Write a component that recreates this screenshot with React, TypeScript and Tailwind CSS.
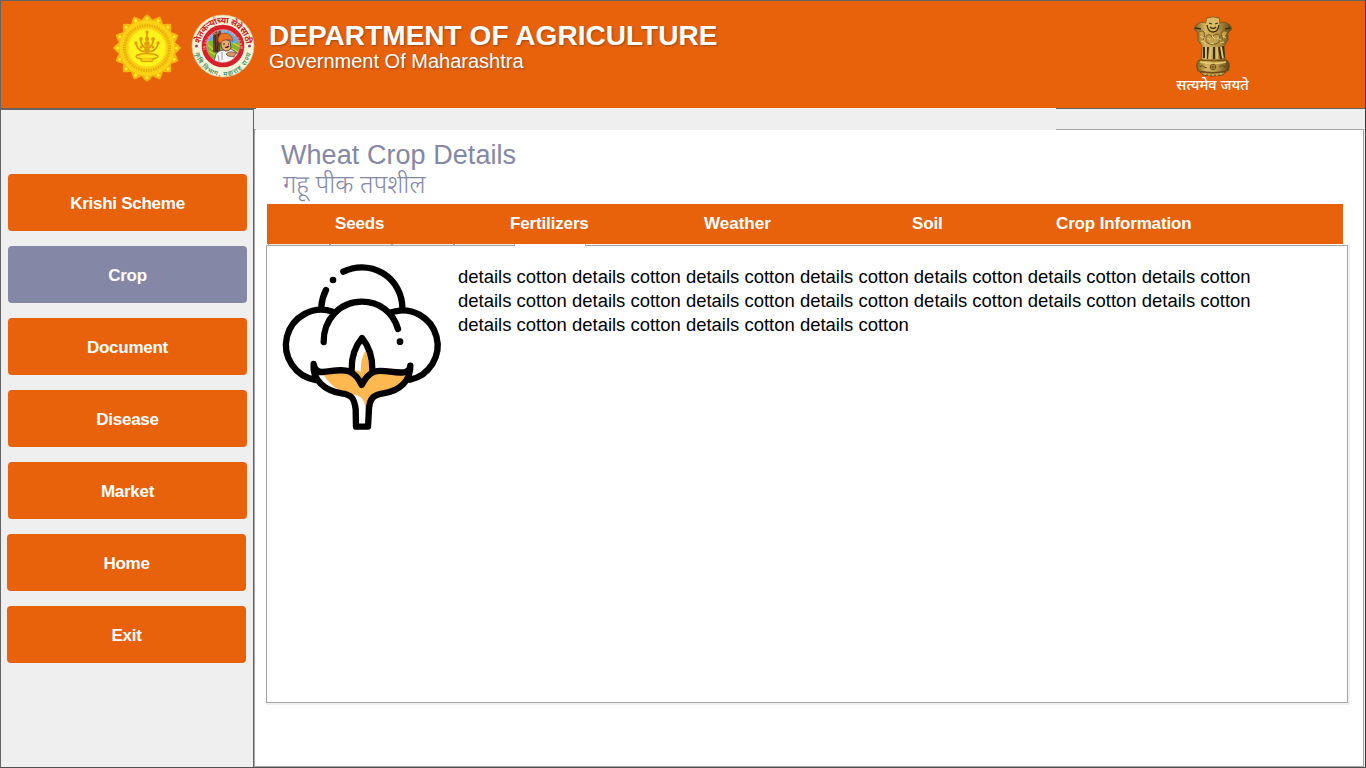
import React from "react";

const menu = [
  { label: "Krishi Scheme" },
  { label: "Crop", active: true },
  { label: "Document" },
  { label: "Disease" },
  { label: "Market" },
  { label: "Home", shifted: true },
  { label: "Exit", shifted: true },
];

const rays = Array.from({ length: 16 }, (_, i) => i * 22.5);

function StateSeal() {
  return (
    <svg className="block h-[68px] w-[68px]" viewBox="-34 -34 68 68">
      <g fill="#fbb50c">
        {rays.map((a) => (
          <path key={a} transform={`rotate(${a})`} d="M-6-27 Q-4-31 0-34 Q4-31 6-27Z" />
        ))}
      </g>
      <circle r="29" fill="#fbb90c" />
      <circle r="27" fill="#fccf12" stroke="#f8de1c" strokeWidth="1" />
      <g fill="#fff02a">
        {rays.map((a) => (
          <circle key={a} transform={`rotate(${a})`} cy="-29.5" r="1.5" />
        ))}
      </g>
      <circle r="22.5" fill="none" stroke="#e6ac0e" strokeWidth="3" strokeDasharray="1.4 1.1" />
      <circle r="19" fill="#fff31c" stroke="#f6dc14" strokeWidth=".8" />
      <g fill="none" stroke="#dc9a08" strokeWidth="1.7" strokeLinecap="round">
        <path d="M0-15V7M-11-4Q-9 4 0 4Q9 4 11-4M-6.5-8Q-5 0 0 0Q5 0 6.5-8M-9 0Q-5 5 0 3Q5 5 9 0" />
      </g>
      <g fill="#e3a00a">
        <circle cy="-16" r="1.8" />
        <circle cx="-6" cy="-9" r="1.9" />
        <circle cx="6" cy="-9" r="1.9" />
        <circle cx="-11" cy="-5" r="1.7" />
        <circle cx="11" cy="-5" r="1.7" />
        <circle cy="-9" r="2.2" />
        <circle cy="-4" r="2.8" />
        <circle cy="2" r="2.8" />
        <circle cx="-6" cy="-1" r="1.5" />
        <circle cx="6" cy="-1" r="1.5" />
      </g>
      <ellipse cy="8.5" rx="11" ry="2.8" fill="#ffe61b" stroke="#dc9a08" strokeWidth="1.3" />
      <path d="M-7 10.5L-5 13.5H5L7 10.5" fill="#f7cc12" stroke="#dc9a08" strokeWidth="1.2" />
    </svg>
  );
}

function DepartmentSeal() {
  return (
    <svg className="block h-[64px] w-[64px]" viewBox="-32 -32 64 64">
      <defs>
        <path id="ringTop" d="M-22.8 0A22.8 22.8 0 0 1 22.8 0" />
        <path id="ringBottom" d="M-28.2 2A28.2 28.2 0 0 0 28.2 2" />
        <path id="ringInner" d="M-17.4 4A17.4 17.4 0 1 1 17.4 4" />
        <clipPath id="farmClip">
          <circle r="16.3" />
        </clipPath>
      </defs>
      <circle r="31" fill="#f5f2d6" stroke="#d8c58e" strokeWidth=".6" />
      <circle r="21.3" fill="#d7202a" />
      <g clipPath="url(#farmClip)">
        <rect x="-18" y="-18" width="36" height="22" fill="#5aaee4" />
        <path d="M-18 -4Q-8-7 2-4T18-5V18H-18Z" fill="#80b62d" />
        <path d="M-15-1l6 5M-14 5l8 5M10-3l7 4M8 2l9 5" stroke="#d5d73b" strokeWidth="1.2" />
        <path d="M-10-14l5-2 3 1-1 22-7-1Z" fill="#70452c" />
        <path d="M-8-12l1 18M-4-14l-2 20" stroke="#38271f" strokeWidth="1" />
        <path d="M-10 19L-7 8Q-4 4 1 4L8 3Q13 5 15 9L14 19Z" fill="#f8f8fb" stroke="#44444b" strokeWidth=".8" />
        <path d="M-1 6v8M-5 9l1 6" stroke="#77787e" strokeWidth=".8" fill="none" />
        <path d="M-2-5Q2-8 7-5L8 2Q6 6 2 5Q-2 3-2-1Z" fill="#e9aa79" stroke="#4e3024" strokeWidth=".8" />
        <path d="M2 1q2 1 4-1M0-2h2M5-2h1" stroke="#38251c" strokeWidth="1.1" fill="none" />
        <path d="M-5-5Q-5-13 2-13Q9-12 10-5Q3-9-3-3Z" fill="#ed7522" stroke="#a94419" strokeWidth=".7" />
        <path d="M3 8q4-4 10-1l-2 4-6-1Z" fill="#d99464" stroke="#4e3024" strokeWidth=".6" />
      </g>
      <circle r="16.5" fill="none" stroke="#e7a3a0" strokeWidth=".6" />
      <text fill="#f0a9a8" fontSize="3.8" fontWeight="700" fontFamily="Liberation Sans, sans-serif">
        <textPath href="#ringInner" textLength="62">IN SERVICE OF THE FARMERS</textPath>
      </text>
      <text fill="#ce2326" fontSize="8.6" fontWeight="700" fontFamily="Noto Sans Devanagari, Noto Sans, sans-serif">
        <textPath href="#ringTop" startOffset="2" textLength="67">शेतकऱ्यांच्या सेवेसाठी</textPath>
      </text>
      <text fill="#3c8f68" fontSize="6.4" fontWeight="600" fontFamily="Noto Sans Devanagari, Noto Sans, sans-serif">
        <textPath href="#ringBottom" startOffset="5" textLength="78">कृषि विभाग, महाराष्ट्र राज्य</textPath>
      </text>
      <circle cx="-26.5" cy="0" r="1.5" fill="#81407b" />
      <circle cx="26.5" cy="0" r="1.5" fill="#81407b" />
    </svg>
  );
}

function LionCapital() {
  return (
    <svg className="block h-[62px] w-[42px]" viewBox="0 0 42 62">
      <defs>
        <linearGradient id="gold" x1="0" x2="1">
          <stop offset="0" stopColor="#7c5f22" />
          <stop offset=".3" stopColor="#d8b75c" />
          <stop offset=".65" stopColor="#b59340" />
          <stop offset="1" stopColor="#594317" />
        </linearGradient>
      </defs>
      <path d="M15 2L21 1L27 2L28 7L33 6L38 9L40 13L36 17L36 24L32 30L33 44H9L10 30L6 24L6 17L2 13L4 9L9 6L14 7Z" fill="url(#gold)" stroke="#66501f" strokeWidth=".7" />
      <path d="M15 3Q21 0 27 3L27 8L24 13L21 16L17 12L14 8Z" fill="#dbbd66" />
      <path d="M15 9Q16 16 21 16Q26 16 27 9M17 7l3 1M23 8l3-1M18 11q3 3 6 0M3 12l6 1M33 13l5-1" fill="none" stroke="#3d2e12" strokeWidth="1.3" />
      <path d="M7 16Q11 13 13 18L11 24M35 16Q31 13 29 18L31 24M14 20Q18 17 20 21Q24 16 28 20L27 26Q21 31 14 26Z" fill="#c3a04a" stroke="#725823" strokeWidth="1" />
      <path d="M8 20l4 2M9 25l5 2M15 22l3 2M20 20l3 3M25 22l4 2M31 20l3 2M18 27l4 1M28 27l4-1" stroke="#e5cc7e" strokeWidth="1" />
      <path d="M12 31V42M16 31L15 43M22 31V43M27 31L29 43M31 30L32 42" stroke="#3c2c0e" strokeWidth="2" />
      <path d="M14 31V43M19 31L18 43M25 31V43M29 31L31 42" stroke="#ddc675" strokeWidth="1.7" />
      <path d="M7 44Q21 46 35 44Q39 48 36 55Q21 58 6 55Q3 48 7 44Z" fill="url(#gold)" stroke="#594619" strokeWidth=".8" />
      <path d="M8 46Q21 49 34 46" fill="none" stroke="#e2c972" strokeWidth="1.5" />
      <circle cx="21" cy="51" r="2.8" fill="#c6a64e" stroke="#5f491b" strokeWidth=".8" />
      <path d="M18 51h6M21 48v6M8 51q2-3 4 0l3 1M27 51q3-3 7 0" stroke="#60491c" strokeWidth=".9" fill="none" />
      <path d="M8 56Q21 58 34 56L31 59Q21 61 11 59Z" fill="#b08e3b" stroke="#49370e" strokeWidth=".7" />
      <path d="M13 57v2M17 58v2M21 58v2M25 58v2M29 57v2" stroke="#e0c471" />
    </svg>
  );
}

function CottonIcon() {
  return (
    <svg className="block h-[185px] w-[185px]" viewBox="0 0 555 555">
      <path d="M145 354C170 360 207 345 233 355C255 363 266 378 275 391C285 371 300 356 325 351C360 348 389 362 415 353C410 390 385 410 350 417C312 424 298 437 293 480L287 480C287 450 284 430 262 421C220 417 190 402 160 360Z" fill="#ffb74f" />
      <path d="M290 282C273 305 272 334 273 350L255 345C256 360 268 370 275 380L303 350Q303 310 290 282Z" fill="#ffb74f" />
      <path d="M140 355L159 359Q177 391 199 404Q154 394 140 355Z" fill="#fff" />
      <g fill="none" stroke="#000" strokeWidth="19" strokeLinecap="round" strokeLinejoin="round">
        <path d="M220 50A122 122 0 0 1 397 156M168 105Q156 128 154 155" />
        <path d="M188 170A106 106 0 1 0 137 375" />
        <path d="M367 171A105 105 0 1 1 420 374" />
        <path d="M161 261C160 195 208 140 276 140C328 140 369 171 384 222" />
        <path d="M245 344C244 306 256 273 276 249C296 273 308 306 307 344" />
        <path d="M131 327Q134 352 158 351C190 348 217 340 239 350C258 358 267 373 275 390C284 372 295 356 313 350C339 342 373 356 401 352Q420 350 421 332C422 377 389 408 340 415C309 420 300 430 297 460L294 515H258L257 463C253 430 245 419 215 415C165 407 126 375 131 327Z" />
      </g>
      <circle cx="189" cy="75" r="10" />
      <circle cx="390" cy="260" r="10" />
    </svg>
  );
}

export default function App() {
  return (
    <div className="flex h-[768px] w-[1366px] flex-col overflow-hidden border border-[#646464] border-r-[#3a3a3a] border-b-[#505050] bg-white font-['Liberation_Sans',Arial,sans-serif]">
      <header className="flex h-[107px] shrink-0 items-start bg-[#e8620c] text-white">
        <div className="ml-[112px] mt-[13px]">
          <StateSeal />
        </div>
        <div className="ml-[10px] mt-[13px]">
          <DepartmentSeal />
        </div>
        <div className="ml-[14px] mt-[19px] whitespace-nowrap [text-shadow:1px_1px_2px_rgba(80,50,30,0.5)]">
          <h1 className="text-[28px] leading-[31px] font-bold tracking-[0.04px]">DEPARTMENT OF AGRICULTURE</h1>
          <p className="-mt-px text-[20px] leading-[22px]">Government Of Maharashtra</p>
        </div>
        <div className="mr-[112px] mt-[15px] ml-auto flex w-[80px] flex-col items-center">
          <LionCapital />
          <span className="-mt-[2px] pr-px font-['Noto_Sans_Devanagari','Noto_Sans',sans-serif] text-[14.6px] leading-[22px] font-medium whitespace-nowrap">सत्यमेव जयते</span>
        </div>
      </header>

      <div className="flex min-h-0 flex-1">
        <aside className="flex w-[253px] shrink-0 flex-col gap-[15px] border-t-2 border-r border-[#646464] bg-[#efefef] pt-[64px] pl-[7px]">
          {menu.map((m) => (
            <button
              key={m.label}
              className={`h-[57px] w-[239px] shrink-0 rounded-[4px] pt-[2px] text-[17px] font-bold tracking-[-0.26px] text-white ${m.active ? "bg-[#8488a6]" : "bg-[#e8620c]"} ${m.shifted ? "-ml-px" : ""}`}
            >
              {m.label}
            </button>
          ))}
        </aside>

        <main className="flex min-w-0 flex-1 flex-col bg-[#efefef]">
          <div className="flex h-[21px] shrink-0">
            <div className="w-[2px] border-t border-[#646464]" />
            <div className="w-[800px]" />
            <div className="flex-1 border-t border-[#646464]" />
          </div>
          <section className="mr-px flex min-h-0 flex-1 flex-col border-r border-b border-l border-[#a6a6a6] bg-white">
            <div className="flex h-px shrink-0">
              <div className="w-px bg-[#a6a6a6]" />
              <div className="w-[800px] bg-[#efefef]" />
              <div className="flex-1 bg-[#a6a6a6]" />
            </div>
            <div className="h-[74px] shrink-0 pt-[10px] pl-[26px] text-[#8488a6]">
              <h2 className="text-[27px] leading-[30px] tracking-[0.06px]">Wheat Crop Details</h2>
              <p className="mt-[2px] pl-[2px] font-['Noto_Sans_Devanagari','Noto_Sans',sans-serif] text-[25px] leading-[30px] font-light">गहू पीक तपशील</p>
            </div>
            <nav className="ml-[12px] flex h-[40px] w-[1076px] shrink-0 items-center bg-[#e8620c] text-[17px] font-bold tracking-[-0.15px] text-white">
              <span className="w-[175px] pl-[68px]">Seeds</span>
              <span className="w-[194px] pl-[68px]">Fertilizers</span>
              <span className="w-[208px] pl-[68px] tracking-normal">Weather</span>
              <span className="w-[144px] pl-[68px]">Soil</span>
              <span className="pl-[68px] whitespace-nowrap">Crop Information</span>
            </nav>
            <div className="ml-[11px] flex h-[459px] w-[1082px] shrink-0 flex-col shadow-[1px_1px_0_1px_#f0f0f0]">
              <div className="flex h-[2px] shrink-0 bg-white">
                <div className="w-[2px] border-b border-[#a6a6a6]" />
                <div className="w-[63px] border-r-2 border-b border-l border-[#a6a6a6] bg-[#efefef]" />
                <div className="w-[62px] border-r-2 border-b border-[#a6a6a6] bg-[#efefef]" />
                <div className="w-[62px] border-r-2 border-b border-[#a6a6a6] bg-[#efefef]" />
                <div className="w-[60px] border-r border-b border-[#a6a6a6] bg-[#efefef]" />
                <div className="w-[70px]" />
                <div className="flex-1 border-b border-l border-[#a6a6a6]" />
              </div>
              <article className="flex min-h-0 flex-1 border-r border-b border-l border-[#a6a6a6] bg-white">
                <div className="mt-[9px] ml-[3px]">
                  <CottonIcon />
                </div>
                <p className="mt-[19px] ml-[3px] w-[810px] text-[18.48px] leading-[24px] text-black">
                  {Array.from({ length: 18 }, () => "details cotton").join(" ")}
                </p>
              </article>
            </div>
          </section>
        </main>
      </div>
    </div>
  );
}
